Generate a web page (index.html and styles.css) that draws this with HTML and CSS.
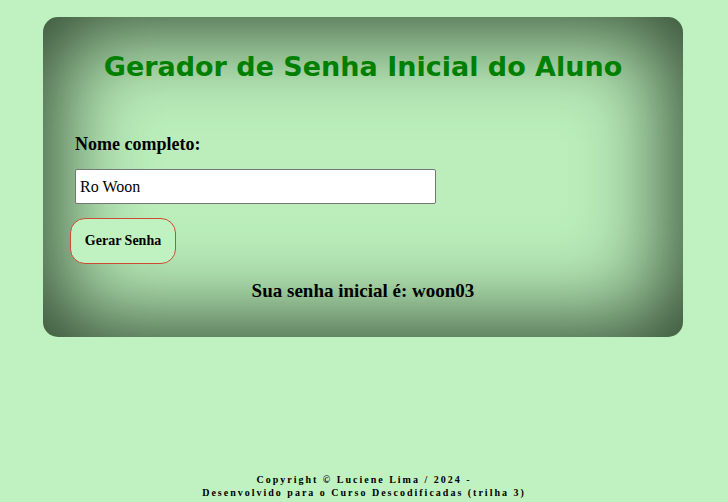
FILE: index.html
```html
<!DOCTYPE html>
<html lang="pt-BR">
<head>
<meta charset="utf-8">
<title>Gerador de Senha</title>
<link rel="stylesheet" href="styles.css">
</head>
<body>
<main class="card">
  <h1 class="title">Gerador de Senha Inicial do Aluno</h1>
  <label class="label" for="nome">Nome completo:</label>
  <input class="field" id="nome" type="text" value="Ro Woon">
  <button class="btn" type="button">Gerar Senha</button>
  <p class="result">Sua senha inicial é: woon03</p>
</main>
<footer class="footer">
  <p>Copyright © Luciene Lima / 2024 -<br>Desenvolvido para o Curso Descodificadas (trilha 3)</p>
</footer>
</body>
</html>
```

FILE: styles.css
```css
html, body {
  margin: 0;
  padding: 0;
}
body {
  background: #bff2c0;
  font-family: "Liberation Serif", serif;
  height: 502px;
  display: flex;
  flex-direction: column;
  align-items: center;
}
.card {
  box-sizing: border-box;
  width: 640px;
  height: 320px;
  margin-top: 17px;
  margin-left: -2px;
  border-radius: 15px;
  background: #bbeebb;
  box-shadow: inset 0 0 90px 14px rgba(45, 68, 45, 1);
  padding: 32px 32px 0 32px;
  display: flex;
  flex-direction: column;
  align-items: flex-start;
}
.title {
  align-self: stretch;
  text-align: center;
  margin: 0;
  font-family: "DejaVu Sans", sans-serif;
  font-weight: bold;
  font-size: 27px;
  line-height: 36px;
  color: #008000;
}
.label {
  margin-top: 48px;
  font-weight: bold;
  font-size: 18px;
  line-height: 22px;
  color: #000;
}
.field {
  box-sizing: border-box;
  margin-top: 14px;
  width: 361px;
  height: 35px;
  border: 1px solid #767676;
  border-radius: 2px;
  background: #fff;
  padding: 0 4px;
  font-family: "Liberation Serif", serif;
  font-size: 16px;
  color: #000;
}
.btn {
  box-sizing: border-box;
  margin-top: 14px;
  margin-left: -5px;
  width: 106px;
  height: 46px;
  border: 1.5px solid #cf4a32;
  border-radius: 15px;
  background: #bff2c0;
  font-family: "Liberation Serif", serif;
  font-weight: bold;
  font-size: 14px;
  color: #000;
  padding: 0;
}
.result {
  align-self: stretch;
  text-align: center;
  margin: 16px 0 0 0;
  font-weight: bold;
  font-size: 19px;
  line-height: 22px;
  color: #000;
}
.footer {
  margin-top: auto;
  text-align: center;
}
.footer p {
  margin: 0 0 3px 0;
  font-weight: bold;
  font-size: 10px;
  line-height: 13px;
  letter-spacing: 2px;
  color: #000;
}
```
